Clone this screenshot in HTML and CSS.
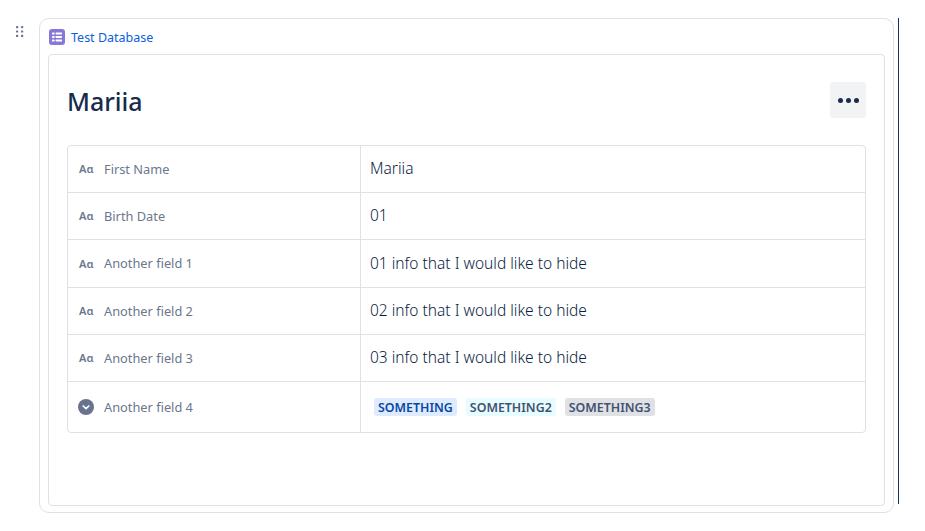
FILE: index.html
```html
<!DOCTYPE html>
<html lang="en">
<head>
<meta charset="utf-8">
<title>Test Database</title>
<link rel="stylesheet" href="styles.css">
</head>
<body>
<div class="page">
  <div class="gutter">
    <svg class="drag" width="8" height="12" viewBox="0 0 8 12"><g fill="#6b778c"><rect x="0" y="0" width="2.2" height="2.2" rx=".6"/><rect x="5" y="0" width="2.2" height="2.2" rx=".6"/><rect x="0" y="4.4" width="2.2" height="2.2" rx=".6"/><rect x="5" y="4.4" width="2.2" height="2.2" rx=".6"/><rect x="0" y="8.800" width="2.2" height="2.2" rx=".6"/><rect x="5" y="8.800" width="2.2" height="2.2" rx=".6"/></g></svg>
  </div>
  <div class="outer">
    <a class="dbtitle">
      <svg class="dbicon" width="16" height="16" viewBox="0 0 16 16"><rect width="16" height="16" rx="3" fill="#8777d9"/><g fill="#fff"><rect x="3" y="3.5" width="2.6" height="2" rx=".4"/><rect x="6.6" y="3.5" width="6.4" height="2" rx=".4"/><rect x="3" y="7" width="2.6" height="2" rx=".4"/><rect x="6.6" y="7" width="6.4" height="2" rx=".4"/><rect x="3" y="10.5" width="2.6" height="2" rx=".4"/><rect x="6.6" y="10.5" width="6.4" height="2" rx=".4"/></g></svg>
      <span class="dbname">Test Database</span>
    </a>
    <div class="card">
      <div class="head">
        <h1>Mariia</h1>
        <button class="more" aria-label="More"><i></i><i></i><i></i></button>
      </div>
      <div class="table">
        <div class="row r47"><div class="key"><span class="aa">Aɑ</span><span>First Name</span></div><div class="val">Mariia</div></div>
        <div class="row r47"><div class="key"><span class="aa">Aɑ</span><span>Birth Date</span></div><div class="val">01</div></div>
        <div class="row r48"><div class="key"><span class="aa">Aɑ</span><span>Another field 1</span></div><div class="val">01 info that I would like to hide</div></div>
        <div class="row r47"><div class="key"><span class="aa">Aɑ</span><span>Another field 2</span></div><div class="val">02 info that I would like to hide</div></div>
        <div class="row r47"><div class="key"><span class="aa">Aɑ</span><span>Another field 3</span></div><div class="val">03 info that I would like to hide</div></div>
        <div class="row last"><div class="key key-sel"><svg class="sel" width="16" height="16" viewBox="0 0 16 16"><circle cx="8" cy="8" r="8" fill="#68738d"/><path d="M5.2 7l2.8 2.6L10.800 7" fill="none" stroke="#fff" stroke-width="1.700" stroke-linecap="round" stroke-linejoin="round"/></svg><span>Another field 4</span></div><div class="val tags"><span class="tag blue">SOMETHING</span><span class="tag teal">SOMETHING2</span><span class="tag grey">SOMETHING3</span></div></div>
      </div>
    </div>
  </div>
  <div class="rule"></div>
</div>
</body>
</html>
```
FILE: styles.css
```css
* { box-sizing: border-box; }
html, body { margin: 0; padding: 0; background: #fff; }
body { font-family: "Noto Sans", "Open Sans", sans-serif; color: #172b4d; width: 925px; height: 531px; overflow: hidden; }
.page { display: flex; align-items: flex-start; padding-top: 18px; }
.gutter { width: 39px; padding: 8px 0 0 16px; }
.drag { display: block; }
.outer { width: 855px; height: 495px; border: 1px solid #dfe1e6; border-radius: 10px; padding: 0 8px 6px 8px; display: flex; flex-direction: column; }
.dbtitle { height: 35px; display: flex; align-items: center; gap: 6px; padding-left: 1px; color: #0b5fe0; font-size: 12.5px; }
.dbname { padding-top: 2px; }
.dbicon { display: block; flex: none; }
.card { flex: 1; border: 1px solid #dfe1e6; border-radius: 4px; padding: 27px 18px 0 18px; }
.head { display: flex; justify-content: space-between; align-items: center; height: 36px; margin-bottom: 27px; }
h1 { margin: 0; padding-top: 2px; font-size: 25px; font-weight: 500; color: #172b4d; line-height: 36px; }
.more { width: 36px; height: 36px; border: 0; border-radius: 4px; background: #f2f3f5; display: flex; align-items: center; justify-content: center; gap: 3px; padding: 0; }
.more i { display: block; width: 5px; height: 5px; border-radius: 50%; background: #172b4d; }
.table { border: 1px solid #dfe1e6; border-radius: 4px; }
.row { display: flex; border-bottom: 1px solid #dfe1e6; }
.r47 { height: 47px; }
.r48 { height: 48px; }
.last { height: 50px; border-bottom: 0; }
.key { width: 293px; border-right: 1px solid #dfe1e6; display: flex; align-items: center; padding: 0 0 1px 11px; font-size: 12.8px; color: #6b778c; }
.key-sel { padding-left: 10px; padding-bottom: 0; }
.aa { width: 25px; flex: none; font-size: 11px; font-weight: 600; color: #6b778c; }
.sel { width: 16px; flex: none; margin-right: 10px; display: block; }
.val { flex: 1; display: flex; align-items: center; padding: 0 0 2px 9px; font-size: 15.5px; font-weight: 350; color: #091e42; }
.tags { padding: 0 0 0 13px; gap: 9px; }
.tag { height: 18px; display: flex; align-items: center; padding: 0 4px; border-radius: 3px; font-size: 12.4px; font-weight: 600; }
.blue { background: #deebff; color: #0747a6; }
.teal { background: #e6fcff; color: #42526e; }
.grey { background: #dfe1e6; color: #42526e; }
.rule { width: 1px; height: 486px; margin-left: 4px; background: #12325e; }
```
